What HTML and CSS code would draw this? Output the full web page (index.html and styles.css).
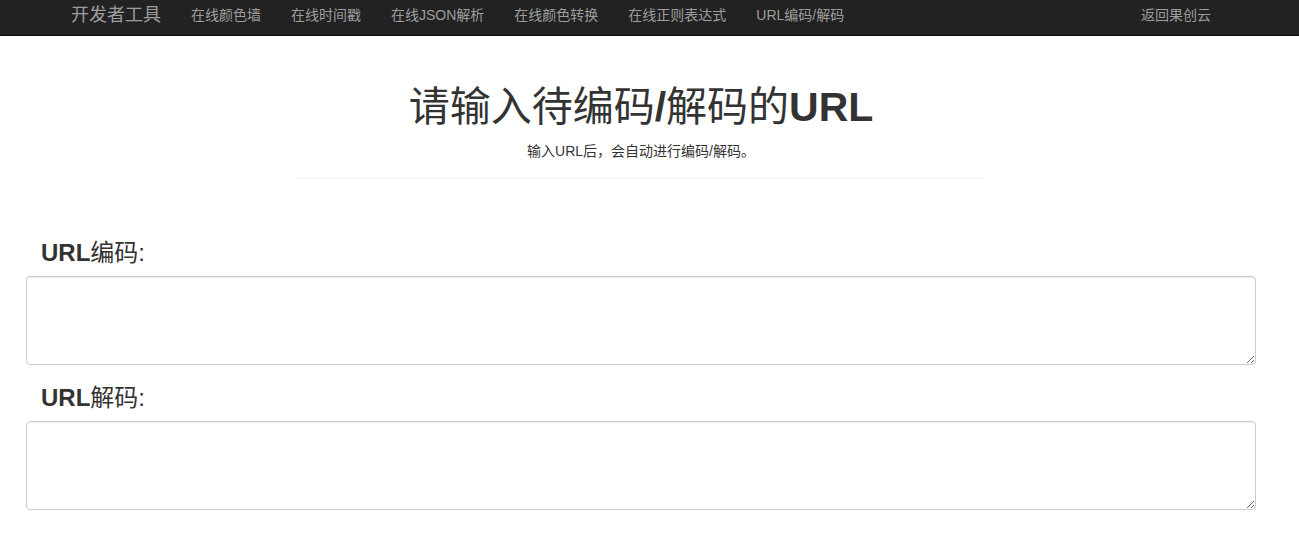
FILE: index.html
```html
<!DOCTYPE html>
<html lang="zh-CN">
<head>
<meta charset="utf-8">
<title>URL编码/解码</title>
<link rel="stylesheet" href="styles.css">
</head>
<body>
<nav class="navbar">
  <div class="nav-inner">
    <a class="brand" href="#">开发者工具</a>
    <ul class="nav-links">
      <li><a href="#">在线颜色墙</a></li>
      <li><a href="#">在线时间戳</a></li>
      <li><a href="#">在线JSON解析</a></li>
      <li><a href="#">在线颜色转换</a></li>
      <li><a href="#">在线正则表达式</a></li>
      <li><a href="#">URL编码/解码</a></li>
    </ul>
    <ul class="nav-links nav-right">
      <li><a href="#">返回果创云</a></li>
    </ul>
  </div>
</nav>
<main class="page">
  <header class="page-header">
    <h1 class="title">请输入待编码<b class="latin">/</b>解码的<b class="latin">URL</b></h1>
    <p class="subtitle">输入URL后，会自动进行编码/解码。</p>
  </header>
  <section class="form">
    <label class="field-label" for="enc"><b class="latin">URL</b>编码:</label>
    <textarea id="enc" class="field"></textarea>
    <label class="field-label" for="dec"><b class="latin">URL</b>解码:</label>
    <textarea id="dec" class="field"></textarea>
  </section>
</main>
</body>
</html>
```
FILE: styles.css
```css
* { box-sizing: border-box; }
html, body { margin: 0; padding: 0; }
body {
  background: #fff;
  color: #333;
  font-family: "Liberation Sans", "Noto Sans CJK SC", sans-serif;
  font-size: 14px;
}
.navbar {
  background: #222;
  border-bottom: 1px solid #080808;
  height: 36px;
  padding-right: 17px;
}
.nav-inner {
  width: 1170px;
  margin: 0 auto;
  display: flex;
  align-items: center;
  height: 30px;
}
.brand {
  color: #9d9d9d;
  text-decoration: none;
  font-size: 18px;
  line-height: 28px;
  padding: 0 15px;
}
.nav-links {
  list-style: none;
  display: flex;
  margin: 0;
  padding: 0;
}
.nav-links a {
  display: block;
  color: #9d9d9d;
  text-decoration: none;
  font-size: 14px;
  line-height: 20px;
  padding: 0 15px;
}
.nav-right { margin-left: auto; }
.page { padding-right: 17px; }
.page-header {
  width: 685px;
  margin: 46px auto 0;
  text-align: center;
  border-bottom: 1px solid #eee;
  padding-bottom: 17px;
}
.title {
  margin: 0;
  font-size: 41px;
  line-height: 50px;
  font-weight: normal;
  color: #333;
}
.latin { font-weight: bold; }
.subtitle {
  margin: 9px 0 0;
  font-size: 14px;
  line-height: 20px;
  color: #333;
}
.form {
  margin: 60px 26px 0;
  display: flex;
  flex-direction: column;
}
.field-label {
  font-size: 24px;
  line-height: 28px;
  padding-left: 15px;
  margin-bottom: 9px;
  color: #333;
}
.field {
  width: 1230px;
  height: 89px;
  border: 1px solid #ccc;
  border-radius: 4px;
  box-shadow: inset 0 1px 1px rgba(0,0,0,.075);
  margin: 0 0 19px;
  font-family: inherit;
  font-size: 14px;
  padding: 6px 12px;
}
```
